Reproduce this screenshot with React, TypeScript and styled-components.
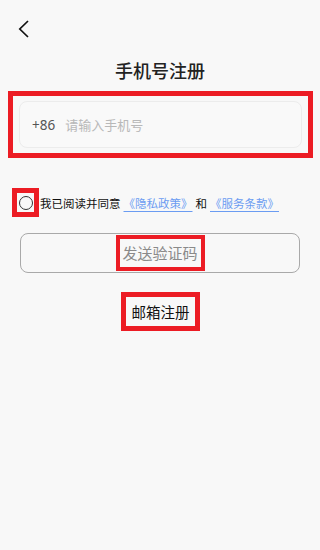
import React from "react";
import styled, { createGlobalStyle } from "styled-components";

const Global = createGlobalStyle`
  html, body { margin: 0; padding: 0; background: #f8f8f8; }
  body { font-family: "Noto Sans CJK SC", "Noto Sans", sans-serif; }
  * { box-sizing: border-box; }
`;

const Page = styled.div`
  width: 320px;
  height: 550px;
  background: #f8f8f8;
  display: flex;
  flex-direction: column;
`;

const Header = styled.div`
  height: 57px;
  padding: 20px 0 0 18px;
`;

const BackButton = styled.button`
  border: 0;
  padding: 0;
  background: none;
  width: 12px;
  height: 18px;
  display: block;
`;

const Title = styled.h1`
  margin: 0;
  font-size: 18px;
  line-height: 26px;
  font-weight: 500;
  color: #222;
  text-align: center;
`;

const Marked = styled.div<{ $w?: number }>`
  border: ${(p) => p.$w ?? 5}px solid #ec1c24;
`;

const InputFrame = styled(Marked)`
  margin: 8px 7px 0 8px;
  padding: 5px 6px;
`;

const PhoneField = styled.div`
  height: 47px;
  border: 1px solid #ececec;
  border-radius: 8px;
  background: #f9f9f9;
  display: flex;
  align-items: center;
  padding-left: 12px;
  gap: 10px;
  font-size: 13px;
`;

const Prefix = styled.span`
  color: #555;
  font-family: "Noto Sans", sans-serif;
  font-size: 13.5px;
  font-weight: 400;
`;

const Placeholder = styled.span`
  color: #b8b8b8;
`;

const AgreeRow = styled.div`
  margin: 30px 0 0 12px;
  display: flex;
  align-items: center;
  font-size: 11.5px;
  color: #111;
  white-space: nowrap;
`;

const CheckFrame = styled(Marked)`
  width: 27px;
  height: 29px;
  display: flex;
  align-items: center;
  justify-content: center;
  margin-right: 1px;
`;

const Radio = styled.span`
  width: 14px;
  height: 14px;
  border: 1.4px solid #333;
  border-radius: 50%;
  margin-top: 1px;
`;

const Link = styled.a`
  color: #6b9cf2;
  text-decoration: underline;
  text-underline-offset: 3px;
  margin: 0 3px;
`;

const SendButton = styled.button`
  margin: 16px 20px 0 20px;
  height: 40px;
  border: 1px solid #a9a9a9;
  border-radius: 8px;
  background: transparent;
  display: flex;
  align-items: center;
  justify-content: center;
  padding: 0;
`;

const ButtonLabel = styled(Marked)`
  font-size: 15px;
  line-height: 28px;
  width: 89px;
  text-align: center;
  color: #8a8a8a;
  font-family: "Noto Sans CJK SC", sans-serif;
`;

const EmailRow = styled.div`
  margin-top: 19px;
  display: flex;
  justify-content: center;
`;

const EmailLabel = styled(Marked)`
  width: 79px;
  height: 39px;
  font-size: 14.5px;
  line-height: 29px;
  text-align: center;
  color: #111;
  margin-left: 1px;
`;

export default function App() {
  return (
    <>
      <Global />
      <Page>
        <Header>
          <BackButton aria-label="返回">
            <svg width="12" height="18" viewBox="0 0 12 18">
              <polyline points="10,1 1.8,9 10,17" fill="none" stroke="#111" strokeWidth="1.7" />
            </svg>
          </BackButton>
        </Header>
        <Title>手机号注册</Title>
        <InputFrame>
          <PhoneField>
            <Prefix>+86</Prefix>
            <Placeholder>请输入手机号</Placeholder>
          </PhoneField>
        </InputFrame>
        <AgreeRow>
          <CheckFrame>
            <Radio />
          </CheckFrame>
          我已阅读并同意<Link>《隐私政策》</Link>和<Link>《服务条款》</Link>
        </AgreeRow>
        <SendButton>
          <ButtonLabel $w={4}>发送验证码</ButtonLabel>
        </SendButton>
        <EmailRow>
          <EmailLabel $w={5}>邮箱注册</EmailLabel>
        </EmailRow>
      </Page>
    </>
  );
}
